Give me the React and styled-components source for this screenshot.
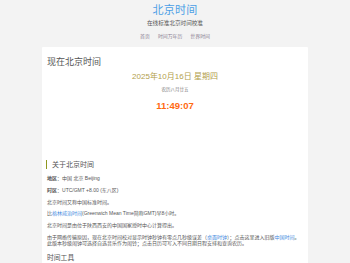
import React from 'react';
import styled, { createGlobalStyle } from 'styled-components';

const GlobalStyle = createGlobalStyle`
  html, body {
    margin: 0;
    padding: 0;
    background: #f3f3f3;
  }
  body {
    font-family: "Liberation Sans", "Noto Sans CJK SC", sans-serif;
    color: #555;
  }
`;

const Header = styled.header`
  text-align: center;
  padding-top: 4px;
`;

const Title = styled.h1`
  margin: 0;
  font-size: 11px;
  line-height: 13px;
  font-weight: normal;
  color: #4c9fe6;
  letter-spacing: 0.3px;
`;

const Subtitle = styled.div`
  margin-top: 2.5px;
  font-size: 5.6px;
  line-height: 7px;
  color: #555;
`;

const Nav = styled.nav`
  margin-top: 6.5px;
  display: flex;
  justify-content: center;
  gap: 8px;
  font-size: 4.9px;
  line-height: 7px;
`;

const NavLink = styled.a`
  color: #8a8092;
  text-decoration: none;
`;

const Card = styled.main`
  width: 256px;
  margin: 6.5px auto 0;
  padding: 10px 5px 20px;
  background: #fff;
  border-radius: 1px;
`;

const NowTitle = styled.h2`
  margin: 0;
  font-size: 9px;
  line-height: 11px;
  font-weight: normal;
  color: #555;
`;

const DateLine = styled.div`
  margin-top: 4.5px;
  text-align: center;
  font-size: 8px;
  line-height: 10px;
  color: #b3a04c;
`;

const Lunar = styled.div`
  margin-top: 5px;
  text-align: center;
  font-size: 4.5px;
  line-height: 6px;
  color: #777;
`;

const Clock = styled.div`
  margin-top: 7px;
  text-align: center;
  font-size: 9.5px;
  line-height: 12px;
  font-weight: bold;
  color: #ff6a13;
`;

const SectionTitle = styled.h3`
  margin: ${p => p.$top}px 0 0 ${p => (p.$bar ? -1 : 0)}px;
  padding-left: ${p => (p.$bar ? 5 : 0)}px;
  border-left: ${p => (p.$bar ? '1.5px solid #8f981f' : 'none')};
  font-size: ${p => p.$size}px;
  line-height: 9px;
  font-weight: normal;
  color: #555;
`;

const Para = styled.p`
  margin: ${p => p.$top || 0}px 0 0;
  font-size: 5px;
  line-height: 6px;
  color: #555;
  & + & {
    margin-top: 5.8px;
  }
`;

const Label = styled.b`
  font-weight: bold;
`;

const Link = styled.a`
  color: #3f8ae0;
  text-decoration: none;
`;

export default function App() {
  return (
    <>
      <GlobalStyle />
      <Header>
        <Title>北京时间</Title>
        <Subtitle>在线标准北京时间校准</Subtitle>
        <Nav>
          <NavLink>首页</NavLink>
          <NavLink>时间万年历</NavLink>
          <NavLink>世界时间</NavLink>
        </Nav>
      </Header>
      <Card>
        <NowTitle>现在北京时间</NowTitle>
        <DateLine>2025年10月16日 星期四</DateLine>
        <Lunar>农历八月廿五</Lunar>
        <Clock>11:49:07</Clock>

        <SectionTitle $bar $top={47.5} $size={7}>关于北京时间</SectionTitle>
        <Para $top={6.5}><Label>地区</Label>：中国 北京 Beijing</Para>
        <Para><Label>时区</Label>：UTC/GMT +8.00 (东八区)</Para>
        <Para>北京时间又称中国标准时间。</Para>
        <Para>比<Link>格林威治时间</Link>(Greenwich Mean Time简称GMT)早8小时。</Para>
        <Para>北京时间是由位于陕西西安的中国国家授时中心计算得出。</Para>
        <Para>
          由于网络传输原因，现在北京时间校对显示时钟秒钟有零点几秒级误差（<Link>桌面时钟</Link>）；点击这里进入旧版<Link>中国时间</Link>。
          <br />
          此版本秒级闹钟可选择自选音乐作为闹铃；点击日历可写入不同日期日程安排和查询农历。
        </Para>

        <SectionTitle $top={7.5} $size={6.8}>时间工具</SectionTitle>
      </Card>
    </>
  );
}
